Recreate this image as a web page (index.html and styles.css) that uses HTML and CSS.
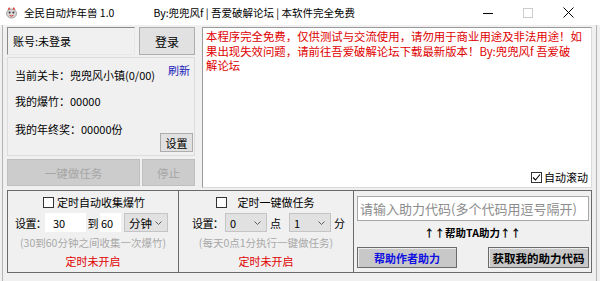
FILE: index.html
```html
<!DOCTYPE html>
<html lang="zh-CN">
<head>
<meta charset="utf-8">
<title>全民自动炸年兽 1.0</title>
<link rel="stylesheet" href="styles.css">
</head>
<body>
<div class="window">
  <div class="titlebar">
    <svg class="app-icon" width="11" height="12" viewBox="0 0 11 12">
      <ellipse cx="5.5" cy="6.5" rx="5" ry="4.5" fill="#d9d9d9" stroke="#8c8c8c" stroke-width="0.8"/>
      <circle cx="3.6" cy="5.6" r="1" fill="#333"/>
      <circle cx="7.4" cy="5.6" r="1" fill="#333"/>
      <path d="M3.5 8.3 Q5.5 10 7.5 8.3" fill="none" stroke="#d22" stroke-width="1"/>
      <path d="M2 2.6 L3.2 0.6 L4 2.4 M7 2.4 L7.8 0.6 L9 2.6" fill="#e33" stroke="#c22" stroke-width="0.6"/>
    </svg>
    <span class="title">全民自动炸年兽 1.0</span>
    <span class="subtitle">By:兜兜风f | 吾爱破解论坛 | 本软件完全免费</span>
    <div class="controls">
      <span class="ctl"><svg width="10" height="10" viewBox="0 0 10 10"><line x1="0" y1="5.5" x2="10" y2="5.5" stroke="#000" stroke-width="1"/></svg></span>
      <span class="ctl"><svg width="10" height="10" viewBox="0 0 10 10"><rect x="0.5" y="0.5" width="9" height="9" fill="none" stroke="#cccccc" stroke-width="1"/></svg></span>
      <span class="ctl"><svg width="11" height="11" viewBox="0 0 11 11"><path d="M0.5 0.5 L10.5 10.5 M10.5 0.5 L0.5 10.5" stroke="#000" stroke-width="1"/></svg></span>
    </div>
  </div>

  <div class="frame">
    <div class="top">
      <div class="leftcol">
        <div class="account-row">
          <div class="account">账号:未登录</div>
          <div class="btn login">登录</div>
        </div>
        <div class="info">
          <div class="info-row1">
            <span class="stage">当前关卡：兜兜风小镇(0/00)</span>
            <span class="refresh">刷新</span>
          </div>
          <div class="info-row2">我的爆竹：00000</div>
          <div class="info-row3">
            <span class="bonus">我的年终奖：00000份</span>
            <span class="btn small">设置</span>
          </div>
        </div>
        <div class="actions">
          <div class="btn disabled wide">一键做任务</div>
          <div class="btn disabled narrow">停止</div>
        </div>
      </div>
      <div class="log">
        <div class="log-text">本程序完全免费，仅供测试与交流使用，请勿用于商业用途及非法用途！如<br>果出现失效问题，请前往吾爱破解论坛下载最新版本！By:兜兜风f 吾爱破<br>解论坛</div>
        <label class="autoscroll">
          <span class="cb checked"><svg width="9" height="9" viewBox="0 0 9 9"><path d="M1 4.5 L3.5 7 L8 1.5" fill="none" stroke="#000" stroke-width="1.1"/></svg></span>
          <span>自动滚动</span>
        </label>
      </div>
    </div>

    <div class="groups">
      <div class="group g1">
        <div class="g-head"><span class="cb"></span><span class="g-label tight">定时自动收集爆竹</span></div>
        <div class="g-row">
          <span class="lbl">设置：</span>
          <span class="field f1">30</span>
          <span class="to">到</span>
          <span class="field f2">60</span>
          <span class="select s-unit">分钟<svg class="chev" width="7" height="4" viewBox="0 0 7 4"><path d="M0.5 0.5 L3.5 3.5 L6.5 0.5" fill="none" stroke="#606060" stroke-width="1"/></svg></span>
        </div>
        <div class="g-hint">(30到60分钟之间收集一次爆竹)</div>
        <div class="g-status">定时未开启</div>
      </div>
      <div class="group g2">
        <div class="g-head"><span class="cb"></span><span class="g-label wide-gap">定时一键做任务</span></div>
        <div class="g-row r2">
          <span class="lbl">设置：</span>
          <span class="select s-hour">0<svg class="chev" width="7" height="4" viewBox="0 0 7 4"><path d="M0.5 0.5 L3.5 3.5 L6.5 0.5" fill="none" stroke="#606060" stroke-width="1"/></svg></span>
          <span class="unit">点</span>
          <span class="select s-min">1<svg class="chev" width="7" height="4" viewBox="0 0 7 4"><path d="M0.5 0.5 L3.5 3.5 L6.5 0.5" fill="none" stroke="#606060" stroke-width="1"/></svg></span>
          <span class="unit">分</span>
        </div>
        <div class="g-hint">(每天0点1分执行一键做任务)</div>
        <div class="g-status">定时未开启</div>
      </div>
      <div class="group g3">
        <div class="code-input">请输入助力代码(多个代码用逗号隔开)</div>
        <div class="help-label">↑↑帮助TA助力↑↑</div>
        <div class="help-btns">
          <div class="hbtn blue">帮助作者助力</div>
          <div class="hbtn">获取我的助力代码</div>
        </div>
      </div>
    </div>
  </div>
</div>
</body>
</html>
```
FILE: styles.css
```css
* { box-sizing: border-box; }
html, body { margin: 0; padding: 0; }
body {
  width: 600px;
  height: 281px;
  overflow: hidden;
  background: #f0f0f0;
  font-family: "Noto Sans CJK SC", "Noto Sans", sans-serif;
  font-size: 11px;
  color: #000;
}
.window { width: 600px; height: 281px; display: flex; flex-direction: column; }

.titlebar {
  height: 25px;
  background: #fff;
  display: flex;
  align-items: center;
  flex: none;
}
.app-icon { margin-left: 6px; flex: none; }
.title { margin-left: 7px; font-size: 10.5px; line-height: 14px; }
.subtitle { margin-left: 39px; font-size: 10.5px; line-height: 14px; }
.controls { margin-left: auto; display: flex; align-items: center; margin-right: 12px; }
.ctl { width: 40px; display: flex; justify-content: center; align-items: center; height: 25px; }

.frame {
  flex: 1;
  margin: 0 3px 0 2px;
  border-left: 1px solid #b4b4b4;
  border-right: 1px solid #b4b4b4;
  padding: 2px 4px 0 4px;
}

.top { display: flex; height: 161px; }
.leftcol { width: 188px; display: flex; flex-direction: column; }
.account-row { display: flex; height: 28px; gap: 4px; }
.account {
  width: 128px;
  border: 1px solid;
  border-color: #8a8a8a #e8e8e8 #e8e8e8 #8a8a8a;
  padding-left: 5px;
  line-height: 26px;
  font-size: 11px;
}
.btn {
  background: #e1e1e1;
  border: 1px solid #adadad;
  display: flex;
  justify-content: center;
  align-items: center;
}
.login { width: 56px; font-size: 12px; }

.info {
  margin-top: 2px;
  height: 99px;
  border: 1px solid #dcdcdc;
  padding: 0 0 0 7px;
}
.info-row1 { display: flex; justify-content: space-between; align-items: flex-start; }
.stage { margin-top: 11px; line-height: 12px; }
.refresh { color: #1a1ab8; margin-top: 6px; margin-right: 4px; line-height: 12px; }
.info-row2 { margin-top: 14px; line-height: 12px; }
.info-row3 { display: flex; justify-content: space-between; align-items: flex-start; margin-top: 16px; }
.bonus { line-height: 12px; }
.small { width: 33px; height: 19px; margin-top: 10px; margin-right: 1px; font-size: 11px; }

.actions { margin-top: 3px; height: 27px; display: flex; gap: 2px; }
.disabled { background: #cccccc; border-color: #bfbfbf; color: #a6a6a6; font-size: 11.5px; }
.wide { width: 133px; }
.narrow { flex: 1; }

.log {
  margin-left: 7px;
  width: 390px;
  background: #fff;
  border: 1px solid;
  border-color: #9a9a9a #dadada #dadada #9a9a9a;
  padding: 1px 3px 4px 3px;
  display: flex;
  flex-direction: column;
}
.log-text { color: #e00000; font-size: 11.4px; line-height: 14.5px; white-space: nowrap; }
.autoscroll { margin-top: auto; align-self: flex-end; display: flex; align-items: center; gap: 2px; line-height: 12px; }

.cb {
  width: 11px;
  height: 11px;
  border: 1px solid #333;
  background: #fff;
  display: inline-flex;
  align-items: center;
  justify-content: center;
  flex: none;
}

.groups {
  margin-top: 2px;
  height: 83px;
  display: flex;
  border: 1px solid #6a6a6a;
}
.group { display: flex; flex-direction: column; }
.g1 { width: 171px; border-right: 1px solid #6a6a6a; }
.g2 { width: 175px; border-right: 1px solid #6a6a6a; }
.g3 { flex: 1; }

.g-head { height: 22px; display: flex; justify-content: center; align-items: center; }
.g-label { line-height: 12px; }
.g-label.tight { margin-left: 3px; }
.g-label.wide-gap { margin-left: 11px; }
.g1 .g-head { padding-left: 2px; }
.g2 .g-head { padding-right: 2px; }

.g-row { height: 19px; display: flex; align-items: center; padding-left: 7px; white-space: nowrap; }
.g2 .g-row { padding-left: 13px; }
.lbl { width: 30px; flex: none; letter-spacing: -0.6px; white-space: nowrap; }
.field { background: #fff; height: 19px; display: flex; align-items: center; padding-left: 8px; flex: none; }
.f1 { width: 41px; }
.to { width: 12px; text-align: center; margin: 0 1px 0 1px; flex: none; }
.f2 { width: 21px; padding-left: 1px; }
.select {
  height: 19px;
  background: #e1e1e1;
  border: 1px solid #c4c4c4;
  display: flex;
  align-items: center;
  padding-left: 4px;
  padding-right: 5px;
  justify-content: space-between;
  flex: none;
}
.s-unit { width: 44px; margin-left: 3px; font-size: 11.5px; }
.s-hour { width: 42px; margin-left: 3px; }
.s-min { width: 42px; margin-left: 8px; }
.unit { margin-left: 3px; flex: none; }
.chev { flex: none; }

.g-hint { margin-top: 2px; height: 18px; line-height: 18px; text-align: center; color: #a8a8a8; font-size: 10.5px; white-space: nowrap; }
.g-status { line-height: 18px; text-align: center; color: #e00000; font-size: 11px; }

.code-input {
  margin: 5px 2px 0 3px;
  height: 25px;
  background: #fff;
  border: 1px solid #a8a8a8;
  color: #8c8c8c;
  font-size: 13px;
  display: flex;
  align-items: center;
  padding-left: 2px;
  white-space: nowrap;
}
.help-label { height: 24px; line-height: 24px; text-align: center; font-weight: bold; font-size: 10.5px; }
.help-btns { margin-top: 2px; display: flex; justify-content: space-between; padding: 0 2px 0 3px; }
.hbtn {
  height: 21px;
  background: #c8c8c8;
  border: 1px solid #6a6a6a;
  box-shadow: inset 1px 1px #ececec;
  display: flex;
  justify-content: center;
  align-items: center;
  font-weight: bold;
  font-size: 11.5px;
  width: 101px;
}
.hbtn.blue { color: #1010e0; width: 100px; font-size: 11px; }
```
